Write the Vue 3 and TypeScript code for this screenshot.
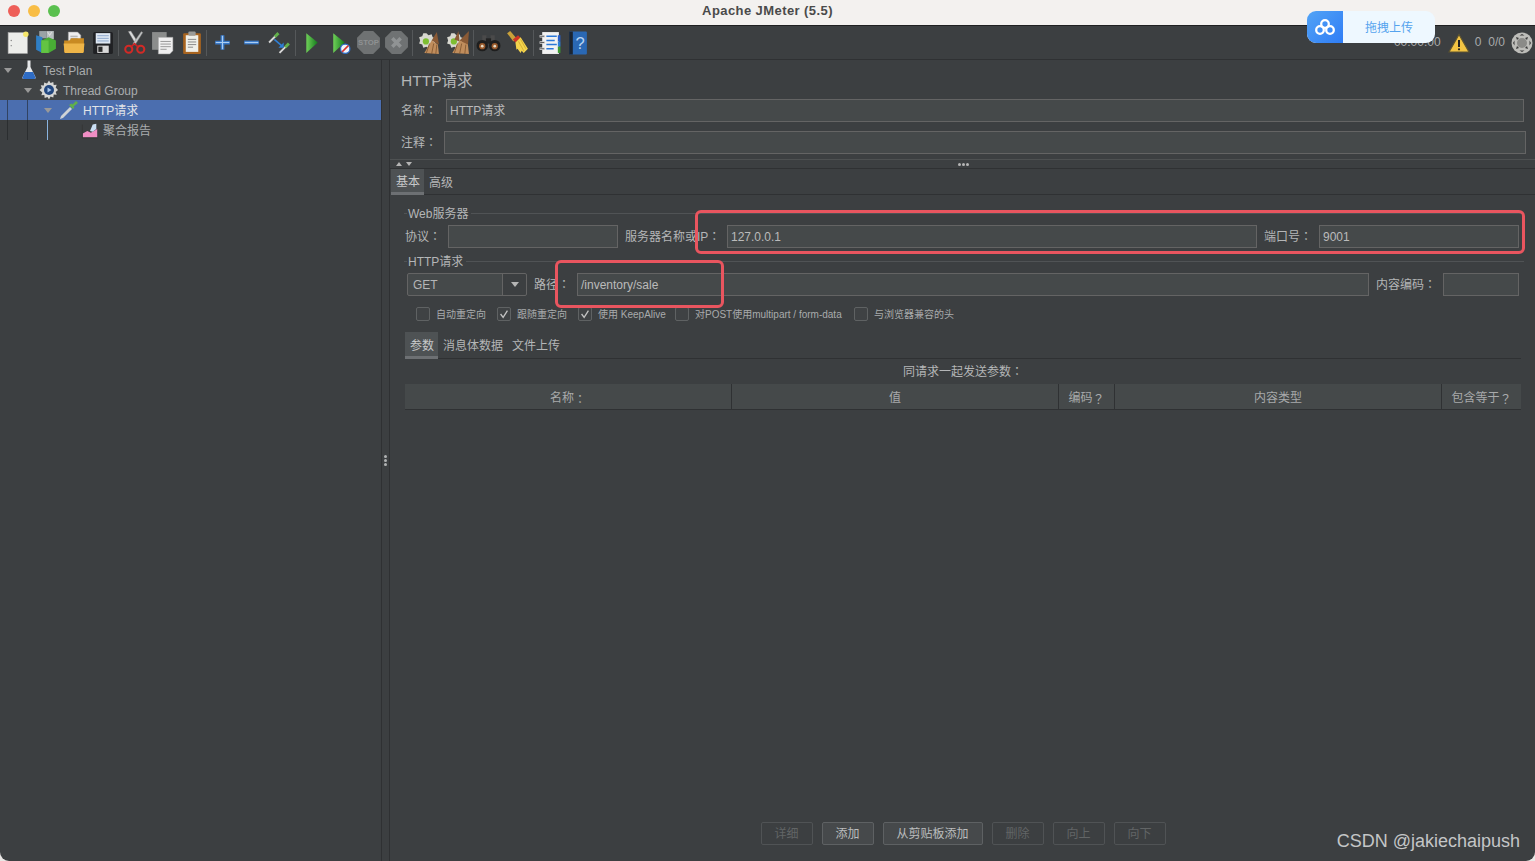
<script setup lang="ts">
interface Check {
  label: string;
  checked: boolean;
  width: number;
}

const checks: Check[] = [
  { label: '自动重定向', checked: false, width: 81 },
  { label: '跟随重定向', checked: true, width: 81 },
  { label: '使用 KeepAlive', checked: true, width: 97 },
  { label: '对POST使用multipart / form-data', checked: false, width: 179 },
  { label: '与浏览器兼容的头', checked: false, width: 110 },
];

const buttons = [
  { label: '详细', on: false, width: 52 },
  { label: '添加', on: true, width: 52 },
  { label: '从剪贴板添加', on: true, width: 100 },
  { label: '删除', on: false, width: 52 },
  { label: '向上', on: false, width: 52 },
  { label: '向下', on: false, width: 52 },
];
</script>

<template>
  <div class="window">
    <header class="titlebar">
      <div class="lights">
        <i class="red"></i>
        <i class="yellow"></i>
        <i class="green"></i>
      </div>
      <span class="title">Apache JMeter (5.5)</span>
    </header>

    <nav class="toolbar">
      <button class="tool">
        <svg viewBox="0 0 24 24"><rect x="3" y="2.500" width="18.500" height="20" fill="#ecedea" stroke="#aaa" stroke-width=".6"/><circle cx="20" cy="4" r="2.600" fill="#f4e66a"/><circle cx="6" cy="10" r=".7" fill="#888"/><circle cx="6" cy="15" r=".7" fill="#888"/></svg>
      </button>
      <button class="tool">
        <svg viewBox="0 0 24 24"><path d="M6 1h7v7H6z" fill="#9aa3a6"/><path d="M13 1h7v8h-7z" fill="#b8bfc0"/><path d="M3 5l6 2v15l-6-3z" fill="#2f7fc6"/><path d="M8 10l7-3 7 3v8l-7 4H8z" fill="#49ad35"/><path d="M8 10h7v12H8z" fill="#63c443"/><path d="M14 2l2 3 2-3" stroke="#ddd" fill="none"/></svg>
      </button>
      <button class="tool">
        <svg viewBox="0 0 24 24"><path d="M7 2h9l3 3v8H7z" fill="#eee" stroke="#999" stroke-width=".5"/><path d="M9 6h7M9 8h7M9 10h7" stroke="#999" stroke-width=".8"/><path d="M3 10h5l2-2h12v13H3z" fill="#c98a22"/><path d="M2.500 13h20l-1 9h-18z" fill="#eeb548"/></svg>
      </button>
      <button class="tool">
        <svg viewBox="0 0 24 24"><rect x="3" y="2" width="19" height="21" rx="1.500" fill="#202124"/><rect x="5.500" y="3" width="14" height="10" fill="#dfe8f3"/><path d="M7 5.500h11M7 8h11M7 10.500h11" stroke="#7d9ac4" stroke-width=".8"/><rect x="7" y="15" width="11" height="7" fill="#d9d9d9"/><rect x="8" y="16" width="4" height="5" fill="#2a2a2a"/></svg>
      </button>
      <span class="sep"></span>
      <button class="tool">
        <svg viewBox="0 0 24 24"><path d="M6 1.500l6.500 11 2-2L8.500 1z" fill="#d8dada" stroke="#777" stroke-width=".4"/><path d="M18.500 1.500l-8 11.500 2 1.500L20 2.500z" fill="#bfc2c2" stroke="#777" stroke-width=".4"/><circle cx="6.500" cy="18.500" r="3.400" fill="none" stroke="#d22a26" stroke-width="2"/><circle cx="18" cy="18.500" r="3.400" fill="none" stroke="#d22a26" stroke-width="2"/><path d="M9 16l3-3 3 3" stroke="#c22" stroke-width="1.500" fill="none"/></svg>
      </button>
      <button class="tool">
        <svg viewBox="0 0 24 24"><rect x="2" y="2" width="14" height="17" fill="#8b8d8c"/><path d="M8 7h14v13l-3 3H8z" fill="#efefef" stroke="#999" stroke-width=".5"/><path d="M10 11h10M10 13.500h10M10 16h10M10 18.500h6" stroke="#888" stroke-width=".8"/></svg>
      </button>
      <button class="tool">
        <svg viewBox="0 0 24 24"><rect x="4" y="3" width="17" height="20" rx="1" fill="#a8641f"/><rect x="6.500" y="5" width="12" height="16" fill="#efefe9"/><rect x="9" y="1.500" width="7" height="4" rx="1" fill="#9b9b98"/><path d="M8.500 9h8M8.500 11.500h8M8.500 14h8M8.500 16.500h5" stroke="#777" stroke-width=".8"/></svg>
      </button>
      <span class="sep"></span>
      <button class="tool">
        <svg viewBox="0 0 24 24"><path d="M12 5v14M5 12h14" stroke="#3a79c8" stroke-width="3.600"/><path d="M12 5.500v13M5.500 12h13" stroke="#a9cdf3" stroke-width="1.100"/></svg>
      </button>
      <button class="tool">
        <svg viewBox="0 0 24 24"><path d="M5 12h14" stroke="#3a79c8" stroke-width="3.600"/><path d="M5.500 12h13" stroke="#a9cdf3" stroke-width="1.100"/></svg>
      </button>
      <button class="tool">
        <svg viewBox="0 0 24 24"><path d="M2 12l6-6" stroke="#d8d8d8" stroke-width="1.800"/><path d="M7.500 6.500L11 3" stroke="#63b04c" stroke-width="2.800"/><path d="M12 22l6-6" stroke="#d8d8d8" stroke-width="1.800"/><path d="M17.500 16.500L21 13" stroke="#63b04c" stroke-width="2.800"/><path d="M7 9l7 6" stroke="#2f7fd6" stroke-width="1.500"/><path d="M11 17h5v-5z" fill="#2f7fd6"/></svg>
      </button>
      <span class="sep"></span>
      <button class="tool">
        <svg viewBox="0 0 24 24"><defs><linearGradient id="go" x1="0" y1="0" x2="1" y2="0"><stop offset="0" stop-color="#6fd058"/><stop offset="1" stop-color="#137a1c"/></linearGradient></defs><path d="M7 3l11 9-11 10z" fill="url(#go)"/></svg>
      </button>
      <button class="tool">
        <svg viewBox="0 0 24 24"><path d="M6 3l11 9-11 10z" fill="url(#go)"/><circle cx="17.500" cy="18" r="4.500" fill="#eef3fb" stroke="#2f6fc8" stroke-width="1.200"/><path d="M14.500 21l6-6" stroke="#d9342b" stroke-width="1.400"/></svg>
      </button>
      <button class="tool">
        <svg viewBox="0 0 24 24"><path d="M7.500 1h9L23 7.500v9L16.500 23h-9L1 16.500v-9z" fill="#6f7273"/><text x="12" y="14.500" class="stop">STOP</text></svg>
      </button>
      <button class="tool">
        <svg viewBox="0 0 24 24"><path d="M7.500 1h9L23 7.500v9L16.500 23h-9L1 16.500v-9z" fill="#6f7273"/><path d="M8 8l8 8M16 8l-8 8" stroke="#909394" stroke-width="3.400"/></svg>
      </button>
      <span class="sep"></span>
      <button class="tool">
        <svg viewBox="0 0 24 24"><path d="M10 3l2 2 3-1 1 3 3 1-1 3 1 3-4 1-2 3-3-2-3 1-1-3-3-1 1-3-1-3 3-1 1-3z" fill="#d8d8d0"/><circle cx="9.500" cy="11" r="3" fill="#7ebe32"/><path d="M20 2l-5 8 7 4z" fill="#8a5a35"/><path d="M15 10l-7 12 14 1-1-9z" fill="#c08d5c"/><path d="M13 13l-3 9M17 13l-2 10M20 14l-1 9" stroke="#80552f" stroke-width=".8"/></svg>
      </button>
      <button class="tool">
        <svg viewBox="0 0 24 24"><path d="M9 3l2 2 3-1 1 3 3 1-1 3 1 3-4 1-2 3-3-2-3 1-1-3-3-1 1-3-1-3 3-1 1-3z" fill="#d8d8d0"/><circle cx="8.500" cy="11" r="3" fill="#7ebe32"/><path d="M23 1l-9 9 8 5z" fill="#8a5a35"/><path d="M13 1l-4 8 5 2z" fill="#8a5a35"/><path d="M14 10l-7 12 16 1-1-9z" fill="#c08d5c"/><path d="M12 13l-3 9M16 13l-2 10M20 14l-1 9" stroke="#80552f" stroke-width=".8"/></svg>
      </button>
      <span class="sep"></span>
      <button class="tool">
        <svg viewBox="0 0 24 24"><path d="M6 5h4v6H6zM14 5h4v6h-4z" fill="#4a4a4a"/><rect x="9.500" y="8" width="5" height="5" fill="#222"/><circle cx="6" cy="15" r="5.500" fill="#1e1e1e"/><circle cx="18" cy="15" r="5.500" fill="#1e1e1e"/><circle cx="6" cy="15.500" r="3" fill="#9a5a2c"/><circle cx="18" cy="15.500" r="3" fill="#9a5a2c"/><circle cx="6" cy="15.500" r="1.300" fill="#e6dcc8"/><circle cx="18" cy="15.500" r="1.300" fill="#e6dcc8"/></svg>
      </button>
      <button class="tool">
        <svg viewBox="0 0 24 24"><path d="M2 3l3-2 6 7-3 3z" fill="#c9a13a"/><path d="M7.500 9l5-4 2.500 2.500-5 4.500z" fill="#cf3527"/><path d="M10 12l5-5 7 11-4 4-2-2-1 2-3-4-1 1z" fill="#f4d44c"/><path d="M13 11l5 9M15 9l5 9" stroke="#c7a32b" stroke-width=".7"/></svg>
      </button>
      <span class="sep"></span>
      <button class="tool">
        <svg viewBox="0 0 24 24"><rect x="5" y="2" width="16" height="21" fill="#f2f2f2"/><rect x="20" y="5" width="2.500" height="6" fill="#2a60c8"/><rect x="20" y="11" width="2.500" height="5" fill="#2f7fd6"/><rect x="20" y="16" width="2.500" height="6" fill="#3d9a34"/><path d="M9 6h10M9 10h8M9 14h10M9 18h7" stroke="#2a78d8" stroke-width="1.500"/><path d="M2.500 6h5M2.500 12h5M2.500 18h5" stroke="#d8d8d8" stroke-width="2.400"/><path d="M3 6h4M3 12h4M3 18h4" stroke="#333" stroke-width=".7"/></svg>
      </button>
      <button class="tool">
        <svg viewBox="0 0 24 24"><rect x="4" y="1.500" width="17" height="22" rx="1" fill="#2a68b4"/><rect x="4" y="1.500" width="3.500" height="22" fill="#1c2430"/><text x="14.500" y="18" class="help">?</text></svg>
      </button>

      <div class="status">
        <span>00:00:00</span>
        <svg class="warn" viewBox="0 0 22 20"><path d="M11 1.500L21 19H1z" fill="#f3c443" stroke="#5c5330" stroke-width="1.200"/><path d="M11 7v7" stroke="#222" stroke-width="2"/><circle cx="11" cy="16.300" r="1.100" fill="#222"/></svg>
        <span class="num">0</span>
        <span class="num">0/0</span>
        <svg class="globe" viewBox="0 0 22 22"><circle cx="11" cy="11" r="10.500" fill="#bdbdb9"/><circle cx="11" cy="11" r="5" fill="#8b8b88"/><path d="M8.500 3.500l2.500-1.500 2.500 1.500zM8.500 18.500l2.500 1.500 2.500-1.500zM3.500 8.500L2 11l1.500 2.500zM18.500 8.500L20 11l-1.500 2.500z" fill="#3a3a3a"/><path d="M5 5l3 1-2 2zM17 5l-3 1 2 2zM5 17l3-1-2-2zM17 17l-3-1 2-2z" fill="#3a3a3a"/></svg>
      </div>
    </nav>

    <main class="body">
      <aside class="tree">
        <div class="node">
          <i class="caret"></i>
          <svg class="node-icon" viewBox="0 0 20 20"><path d="M8.500 .5h3v6.500l5 10c.4 1-.2 2-1.200 2H4.700c-1 0-1.600-1-1.200-2l5-10z" fill="#e6e8ea"/><path d="M6 12h8l2.300 5c.3 1-.2 2-1 2H4.700c-.8 0-1.300-1-1-2z" fill="#2f6cc4"/></svg>
          <span>Test Plan</span>
        </div>
        <div class="node lvl1 alt">
          <i class="caret"></i>
          <svg class="node-icon" viewBox="0 0 20 20"><path d="M10 .5l1.500 2.500 2.800-1 .4 3 3-.2-1 2.800 2.300 2.400-2.300 1.900 1 2.800-3-.2-.4 3-2.800-1L10 19.500l-1.500-2.500-2.800 1-.4-3-3 .2 1-2.800L.5 10l2.300-1.900-1-2.800 3 .2.4-3 2.800 1z" fill="#d6d6d4"/><circle cx="10" cy="10" r="5" fill="#23477f"/><path d="M8.500 7.500l4 2.500-4 2.500z" fill="#a6c5ec"/></svg>
          <span>Thread Group</span>
        </div>
        <div class="node lvl2 selected">
          <em class="guide g0"></em>
          <em class="guide g1"></em>
          <i class="caret"></i>
          <svg class="node-icon" viewBox="0 0 20 20"><path d="M1 19l1-3L11 7l2 2-9 9z" fill="#cfd3d6"/><path d="M10 5l4 4 1.500-1.500-1-1L19 3l-2-2-3.500 3.500-1-1z" fill="#61b04a"/></svg>
          <span class="sel-text">HTTP请求</span>
        </div>
        <div class="node lvl3">
          <em class="guide g0"></em>
          <em class="guide g1"></em>
          <em class="guide g2"></em>
          <svg class="node-icon" viewBox="0 0 20 20"><path d="M2 18v-4l5-3 4 2 7-4v9z" fill="#f08ec4"/><path d="M10 11l3-7 4-1v6l-4 3z" fill="#cbdff5"/><path d="M1.500 4v15h17" fill="none" stroke="#333" stroke-width=".8"/></svg>
          <span>聚合报告</span>
        </div>
      </aside>

      <div class="divider">
        <i></i><i></i><i></i>
      </div>

      <section class="panel">
        <h1 class="heading">HTTP请求</h1>
        <div class="field name-row">
          <label>名称<b>：</b></label>
          <div class="input">HTTP请求</div>
        </div>
        <div class="field comment-row">
          <label>注释<b>：</b></label>
          <div class="input"></div>
        </div>

        <div class="splitter">
          <span class="arrows"><i class="up"></i><i class="down"></i></span>
          <span class="dots"><i></i><i></i><i></i></span>
        </div>

        <div class="tabs main-tabs">
          <span class="tab active">基本</span>
          <span class="tab">高级</span>
        </div>

        <div class="group web-group">
          <div class="legend"><span>Web服务器</span></div>
          <div class="server-row">
            <label>协议<b>：</b></label>
            <div class="input"></div>
            <label>服务器名称或IP<b>：</b></label>
            <div class="input">127.0.0.1</div>
            <label>端口号<b>：</b></label>
            <div class="input">9001</div>
          </div>
        </div>

        <div class="group http-group">
          <div class="legend"><span>HTTP请求</span></div>
          <div class="path-row">
            <div class="select">
              <span>GET</span>
              <i class="select-arrow"></i>
            </div>
            <label>路径<b>：</b></label>
            <div class="input">/inventory/sale</div>
            <label>内容编码<b>：</b></label>
            <div class="input"></div>
          </div>
          <div class="checks">
            <div v-for="c in checks" :key="c.label" class="check" :style="{ width: c.width + 'px' }">
              <span class="box">
                <svg v-if="c.checked" viewBox="0 0 14 14"><path d="M3 7l3 4 5-8" fill="none" stroke="#c4c4c4" stroke-width="1.500"/></svg>
              </span>
              <span class="check-label">{{ c.label }}</span>
            </div>
          </div>
        </div>

        <div class="tabs sub-tabs">
          <span class="tab active">参数</span>
          <span class="tab">消息体数据</span>
          <span class="tab">文件上传</span>
        </div>

        <div class="table-wrap">
          <div class="caption">同请求一起发送参数<b>：</b></div>
          <div class="thead">
            <span>名称<b>：</b></span>
            <span>值</span>
            <span>编码<b>？</b></span>
            <span>内容类型</span>
            <span>包含等于<b>？</b></span>
          </div>
          <div class="tbody"></div>
          <div class="actions">
            <button
              v-for="b in buttons"
              :key="b.label"
              class="action"
              :class="{ on: b.on }"
              :style="{ width: b.width + 'px' }"
            >{{ b.label }}</button>
          </div>
        </div>
      </section>
    </main>

    <!-- screenshot annotations, sitting on top of the window -->
    <div class="mark mark-server"></div>
    <div class="mark mark-path"></div>

    <div class="upload">
      <span class="upload-logo">
        <svg viewBox="0 0 22 18"><g fill="none" stroke="#fff" stroke-width="2.300"><circle cx="11" cy="6" r="3.800"/><circle cx="6" cy="12" r="3.800"/><circle cx="16" cy="12" r="3.800"/></g></svg>
      </span>
      <span class="upload-text">拖拽上传</span>
    </div>

    <div class="watermark">CSDN @jakiechaipush</div>
  </div>
</template>

<style>
html,
body {
  margin: 0;
  background: #e9e7e5;
}
</style>

<style scoped>
.window {
  position: relative;
  width: 1535px;
  height: 861px;
  overflow: hidden;
  display: flex;
  flex-direction: column;
  background: #3c3f41;
  border-radius: 0 0 9px 9px;
  color: #b4b6b7;
  font-family: "Liberation Sans", "Noto Sans CJK SC", sans-serif;
  font-size: 12px;
  line-height: 15px;
}

button {
  font-family: inherit;
  line-height: 15px;
}

/* colon in the labels sits centered, like the mac font */
b {
  font-weight: 400;
  font-family: "Noto Sans CJK TC", sans-serif;
}

.titlebar {
  height: 25px;
  flex: none;
  display: flex;
  align-items: center;
  justify-content: center;
  position: relative;
  background: #f3f1ef;
  border-bottom: 1px solid #1f2021;
}

.lights {
  position: absolute;
  left: 8px;
  top: 5px;
  display: flex;
  gap: 8px;
}

.lights i {
  width: 12px;
  height: 12px;
  border-radius: 50%;
}

.red { background: #ee5f58; }
.yellow { background: #f8bd45; }
.green { background: #5ac04f; }

.title {
  color: #4a4a4a;
  font-weight: 700;
  font-size: 13px;
  letter-spacing: .42px;
  margin-top: -5px;
}

.toolbar {
  height: 33px;
  flex: none;
  display: flex;
  align-items: center;
  padding-left: 3px;
  border-bottom: 1px solid #2f3133;
}

.tool {
  width: 28.4px;
  height: 26px;
  flex: none;
  padding: 0;
  border: 0;
  background: none;
  display: flex;
  align-items: center;
  justify-content: center;
}

.tool svg {
  width: 25px;
  height: 25px;
  flex: none;
}

.stop {
  fill: #8e9192;
  font-size: 7.500px;
  font-weight: 700;
  text-anchor: middle;
}

.help {
  fill: #b8d4f2;
  font-size: 16px;
  text-anchor: middle;
}

.sep {
  width: 1px;
  height: 26px;
  margin: 0 1.250px;
  flex: none;
  background: #55585a;
}

.status {
  margin-left: auto;
  margin-right: 2px;
  display: flex;
  align-items: center;
  color: #a8aaab;
  font-size: 12px;
}

.warn {
  width: 22px;
  height: 20px;
  margin-left: 7px;
}

.num {
  margin-left: 5px;
}

.num + .num {
  margin-left: 7px;
}

.globe {
  width: 22px;
  height: 22px;
  margin-left: 6px;
}

.body {
  flex: 1;
  min-height: 0;
  display: flex;
}

.tree {
  width: 381px;
  flex: none;
  color: #a9acae;
  border-right: 1px solid #2f3133;
  box-sizing: content-box;
}

.node {
  position: relative;
  height: 20px;
  display: flex;
  align-items: center;
  padding-left: 4px;
  white-space: nowrap;
}

.node span {
  padding-top: 2px;
}

.node.alt {
  background: #414446;
}

.node.selected {
  background: #4b6eaf;
}

.sel-text {
  color: #e1e4e8;
}

.lvl1 { padding-left: 24px; }
.lvl2 { padding-left: 44px; }
.lvl3 { padding-left: 81px; }

.guide {
  position: absolute;
  top: 0;
  bottom: 0;
  width: 1px;
  background: rgba(30, 32, 34, .55);
}

.g0 { left: 7px; }
.g1 { left: 27px; }
.g2 { left: 47px; background: #8ab4e0; }

.caret {
  width: 0;
  height: 0;
  flex: none;
  border-left: 4.500px solid transparent;
  border-right: 4.500px solid transparent;
  border-top: 5px solid #999;
}

.node-icon {
  width: 20px;
  height: 20px;
  flex: none;
  margin: 0 4.500px 0 6.500px;
}

.lvl3 .node-icon {
  margin: 0 4px 0 0;
  width: 18px;
  height: 18px;
}

.divider {
  width: 7px;
  flex: none;
  display: flex;
  flex-direction: column;
  align-items: center;
  justify-content: center;
  gap: 1px;
  border-right: 1px solid #2f3133;
  box-sizing: content-box;
}

.divider i {
  width: 3px;
  height: 3px;
  border-radius: 50%;
  background: #b0b2b3;
}

.panel {
  flex: 1;
  min-width: 0;
  display: flex;
  flex-direction: column;
}

.heading {
  margin: 0;
  height: 39px;
  padding: 10px 0 0 11px;
  box-sizing: border-box;
  font-size: 15.500px;
  font-weight: 400;
  line-height: 21px;
  color: #b4b6b7;
}

.field {
  display: flex;
  align-items: center;
  height: 23px;
  padding-left: 11px;
  flex: none;
}

.field label {
  width: 45px;
  flex: none;
}

.comment-row {
  margin-top: 9px;
}

.comment-row label {
  width: 43px;
}

.name-row .input {
  margin-right: 11px;
}

.comment-row .input {
  margin-right: 9px;
}

.input {
  height: 23px;
  flex: 1;
  min-width: 0;
  box-sizing: border-box;
  padding: 0 3px;
  line-height: 23px;
  background: #45494a;
  border: 1px solid #646464;
  color: #bbb;
  white-space: nowrap;
}

.splitter {
  height: 8px;
  margin-top: 5px;
  flex: none;
  border-top: 1px solid #4e5152;
  border-bottom: 1px solid #2f3133;
  display: flex;
  align-items: center;
  position: relative;
}

.arrows {
  display: flex;
  gap: 4px;
  margin-left: 6px;
}

.arrows i {
  width: 0;
  height: 0;
  border-left: 3.500px solid transparent;
  border-right: 3.500px solid transparent;
}

.arrows .up { border-bottom: 4px solid #b5b5b5; }
.arrows .down { border-top: 4px solid #b5b5b5; }

.dots {
  margin-left: 546px;
  display: flex;
  gap: 1px;
}

.dots i {
  width: 3px;
  height: 3px;
  border-radius: 50%;
  background: #b5b5b5;
}

.tabs {
  display: flex;
  flex: none;
  border-bottom: 1px solid #2f3133;
}

.main-tabs {
  height: 26px;
  box-sizing: border-box;
  margin-left: 1px;
}

.tab {
  height: 100%;
  box-sizing: border-box;
  padding: 3px 4px 0;
  display: flex;
  align-items: center;
  color: #b4b6b7;
}

.tab.active {
  background: #4e5254;
  border-bottom: 3px solid #6d7073;
  color: #c6c8c9;
  padding: 4px 4px 0 5px;
  margin-bottom: -1px;
  height: calc(100% + 1px);
}

.main-tabs .tab + .tab {
  padding-left: 5px;
}

.group {
  flex: none;
  margin-left: 14px;
  margin-right: 11px;
}

.web-group {
  margin-top: 11px;
}

.legend {
  height: 14px;
  display: flex;
  align-items: center;
}

.legend span {
  padding: 2px 3px 0 1px;
  white-space: nowrap;
}

.legend::before {
  content: "";
  width: 3px;
  height: 1px;
  background: #505355;
}

.legend::after {
  content: "";
  flex: 1;
  height: 1px;
  background: #505355;
}

.server-row {
  margin-top: 5px;
  display: grid;
  grid-template-columns: 43px 170px 109px 530px 62px 200px;
  height: 23px;
  align-items: center;
  padding-left: 1px;
}

.server-row label:nth-of-type(2) {
  padding-left: 7px;
}

.server-row label:nth-of-type(3) {
  padding-left: 7px;
}

.server-row label {
  white-space: nowrap;
}

.http-group {
  margin-top: 6px;
}

.path-row {
  margin-top: 5px;
  padding: 0 5px 0 3px;
  display: flex;
  align-items: center;
  height: 23px;
}

.path-row label {
  flex: none;
  padding: 0 0 0 7px;
  width: 50px;
  box-sizing: border-box;
  white-space: nowrap;
}

.path-row label:last-of-type {
  width: 74px;
}

.path-row .input:last-child {
  flex: none;
  width: 76px;
}

.select {
  width: 120px;
  height: 23px;
  flex: none;
  box-sizing: border-box;
  border: 1px solid #646464;
  border-radius: 2px;
  display: flex;
  align-items: center;
  padding-left: 5px;
  position: relative;
  background-image: linear-gradient(to right, #45494a 95px, #3c3f41 95px);
}

.select span {
  flex: 1;
  padding-top: 2px;
}

.select-arrow {
  width: 24px;
  height: 100%;
  border-left: 1px solid #646464;
  box-sizing: border-box;
  display: flex;
  align-items: center;
  justify-content: center;
}

.select-arrow::after {
  content: "";
  border-left: 4.500px solid transparent;
  border-right: 4.500px solid transparent;
  border-top: 5px solid #b5b5b5;
}

.checks {
  display: flex;
  margin-top: 11px;
  padding-left: 12px;
  height: 14px;
}

.check {
  display: flex;
  align-items: center;
  flex: none;
}

.box {
  width: 14px;
  height: 14px;
  box-sizing: border-box;
  border: 1px solid #5f6263;
  border-radius: 2px;
  background: #3f4244;
  flex: none;
}

.box svg {
  display: block;
  width: 12px;
  height: 12px;
}

.check-label {
  margin-left: 6px;
  font-size: 10px;
  white-space: nowrap;
  color: #a9abac;
}

.sub-tabs {
  height: 27px;
  box-sizing: border-box;
  margin: 11px 14px 0 15px;
}

.sub-tabs .tab {
  padding: 3px 5px 0 4px;
}

.sub-tabs .tab.active {
  padding: 4px 4px 0 5px;
  width: 33px;
  margin-right: 1px;
}

.sub-tabs .tab + .tab + .tab {
  padding-left: 4px;
}

.table-wrap {
  flex: 1;
  min-height: 0;
  display: flex;
  flex-direction: column;
  margin: 0 14px 0 15px;
}

.caption {
  height: 25px;
  line-height: 23px;
  flex: none;
  text-align: center;
}

.thead {
  height: 26px;
  width: 1116px;
  flex: none;
  display: grid;
  grid-template-columns: 327px 327px 56px 327px 79px;
  background: #45494a;
  border-bottom: 1px solid #2f3133;
  box-sizing: border-box;
}

.thead span {
  display: flex;
  align-items: center;
  justify-content: center;
  box-sizing: border-box;
  padding-top: 3px;
  border-right: 1px solid #2f3133;
  color: #a8aaab;
  white-space: nowrap;
}

.thead span:last-child {
  border-right: 0;
}

.tbody {
  flex: 1;
}

.actions {
  display: flex;
  justify-content: center;
  gap: 9px;
  height: 23px;
  margin-bottom: 16px;
  flex: none;
}

.action {
  height: 23px;
  padding: 2px 0 0;
  box-sizing: border-box;
  border: 1px solid #505355;
  border-radius: 2px;
  background: #3c3f41;
  color: #626566;
  font-size: 12px;
}

.action.on {
  border-color: #5e6163;
  background: #46494b;
  color: #bbbdbe;
}

.mark {
  position: absolute;
  box-sizing: border-box;
  border: 3px solid #e9555f;
  border-radius: 6px;
  pointer-events: none;
}

.mark-server {
  left: 695px;
  top: 210px;
  width: 830px;
  height: 44px;
}

.mark-path {
  left: 555px;
  top: 260px;
  width: 169px;
  height: 48px;
}

.upload {
  position: absolute;
  left: 1307px;
  top: 11px;
  width: 128px;
  height: 32px;
  display: flex;
  border-radius: 9px;
  overflow: hidden;
  background: #eef8ff;
}

.upload-logo {
  width: 36px;
  flex: none;
  display: flex;
  align-items: center;
  justify-content: center;
  background: linear-gradient(135deg, #52a3f5, #2f7df6);
}

.upload-logo svg {
  width: 22px;
  height: 18px;
}

.upload-text {
  flex: 1;
  display: flex;
  align-items: center;
  justify-content: center;
  padding-top: 2px;
  color: #55a3ee;
}

.watermark {
  position: absolute;
  right: 15px;
  top: 830px;
  font-size: 18px;
  line-height: 22px;
  color: #c4c6c7;
  white-space: nowrap;
}
</style>
